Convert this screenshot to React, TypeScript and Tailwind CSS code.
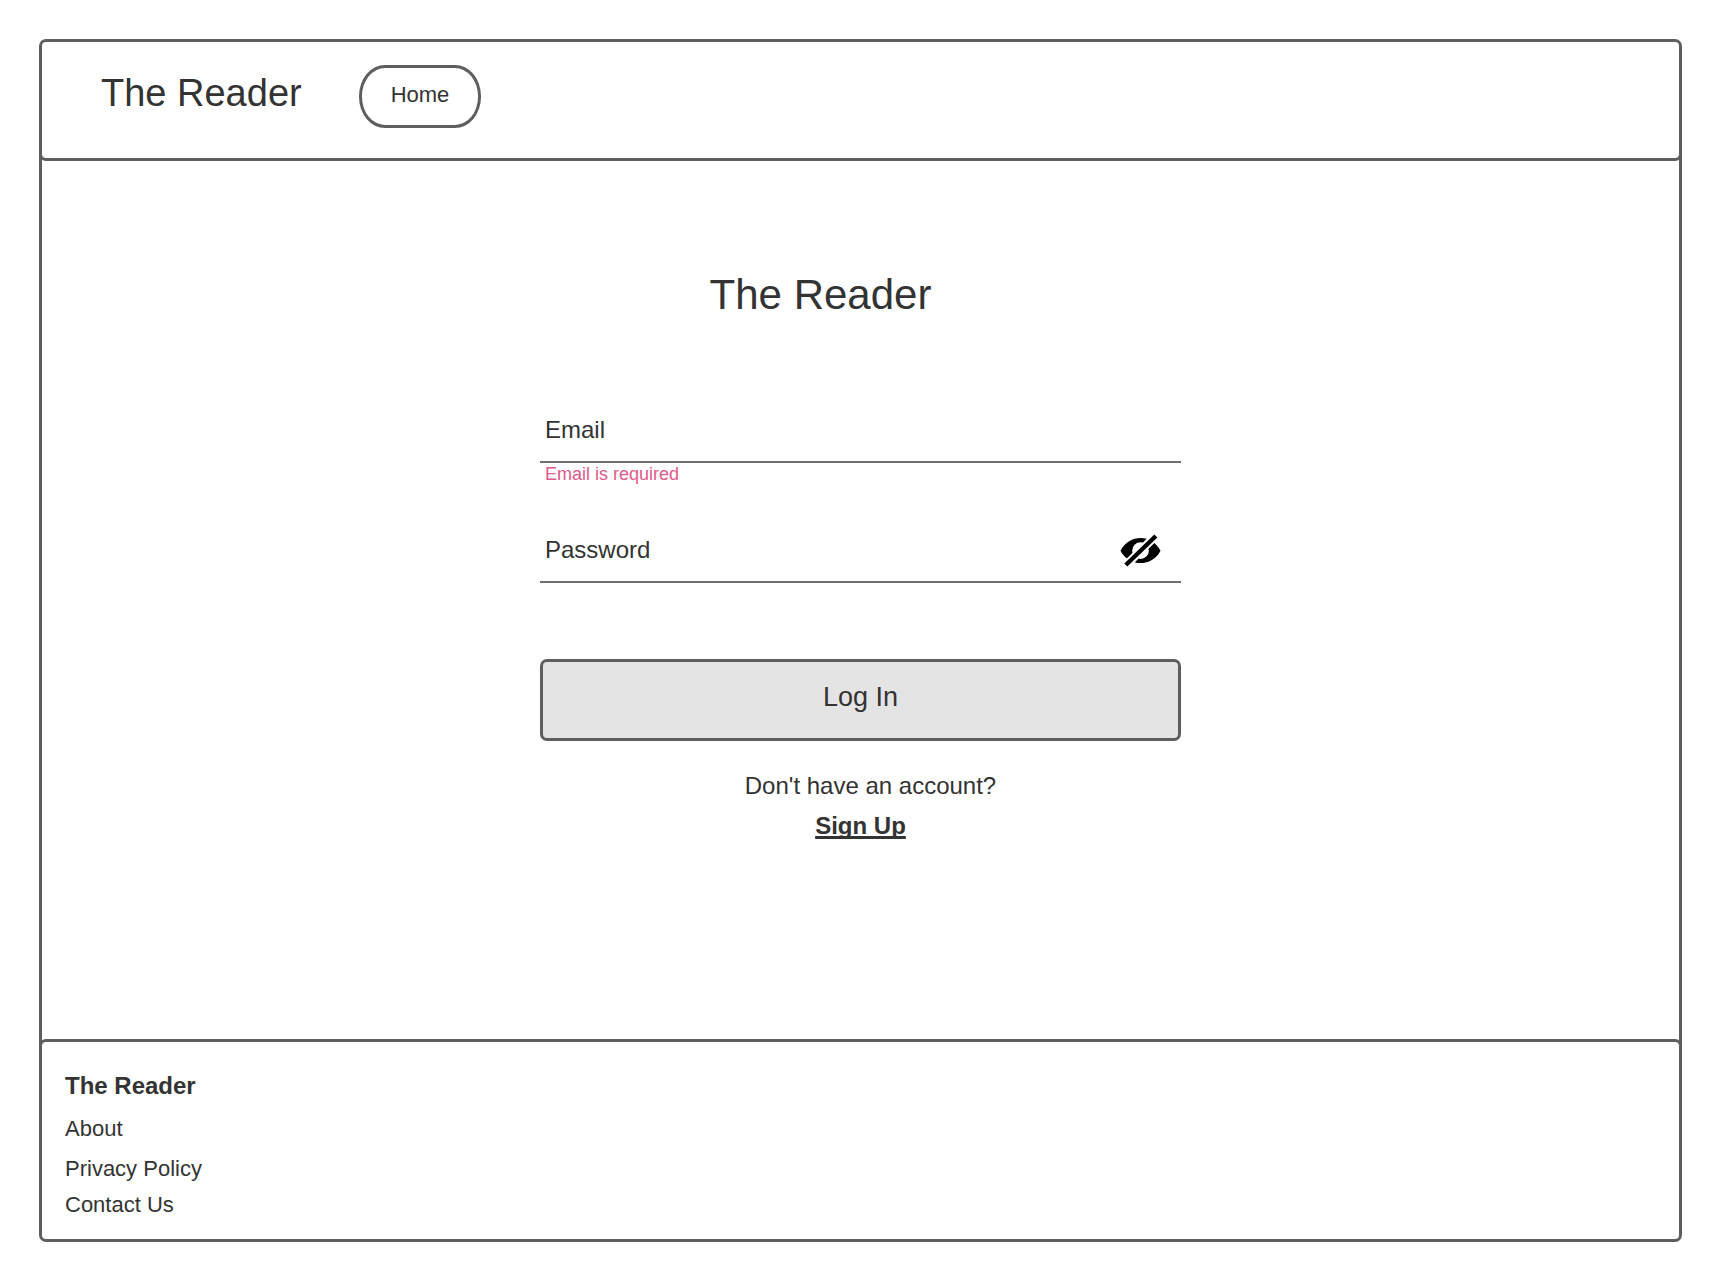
import { useState } from "react";

function EyeOffIcon() {
  return (
    <svg viewBox="90 45 122 99" className="h-[33px] w-[41px]" aria-hidden="true">
      <path
        fill="#000"
        fillRule="evenodd"
        d="M91 95C104 70 128 57 151 57C175 57 198 70 211 95C198 120 175 132 151 132C128 132 104 120 91 95ZM151 70A25 25 0 1 0 151 120A25 25 0 1 0 151 70Z"
      />
      <path fill="none" stroke="#fff" strokeWidth="25" d="M202 45L102 144" />
      <path fill="none" stroke="#000" strokeWidth="13" d="M197 51L107 138" />
    </svg>
  );
}

const footerLink = "text-[22px] leading-[28px] hover:underline";

export default function App() {
  const [showPassword, setShowPassword] = useState(false);

  return (
    <div className="flex min-h-screen flex-col bg-white pt-[39px] pr-[38px] pb-[38px] pl-[39px] font-['Liberation_Sans',Arial,sans-serif] text-[#333333]">
      <header className="flex items-start gap-[57px] rounded-[7px] border-3 border-[#5e5e5e] pt-[23px] pb-[30px] pl-[59px]">
        <h1 className="text-[38px] leading-[56px]">The Reader</h1>
        <nav>
          <a
            href="#home"
            className="block rounded-[26px/31px] border-3 border-[#5e5e5e] px-[29px] pb-1 text-[22px] leading-[53px]"
          >
            Home
          </a>
        </nav>
      </header>

      <main className="-my-2 flex flex-1 flex-col items-center border-x-3 border-[#5e5e5e] px-4 pt-[118px] pb-16">
        <form className="flex w-full max-w-[641px] flex-col" onSubmit={(e) => e.preventDefault()}>
          <h2 className="pr-20 text-center text-[42px] leading-[48px]">The Reader</h2>

          <div className="mt-[95px] flex border-b-2 border-[#6e6e6e] pb-[15px] pl-[5px] text-[24px] leading-[32px]">
            <label htmlFor="email">Email</label>
            <input
              id="email"
              type="email"
              aria-describedby="email-error"
              className="min-w-0 flex-1 px-3 outline-none"
            />
          </div>
          <p id="email-error" className="pl-[5px] text-[18px] leading-[22px] text-[#e0598b]">
            Email is required
          </p>

          <div className="mt-[49px] flex items-center border-b-2 border-[#6e6e6e] pr-5 pb-[15px] pl-[5px] text-[24px] leading-[32px]">
            <label htmlFor="password">Password</label>
            <input
              id="password"
              type={showPassword ? "text" : "password"}
              className="h-8 min-w-0 flex-1 px-3 outline-none"
            />
            <button
              type="button"
              aria-label="Show password"
              aria-pressed={showPassword}
              onClick={() => setShowPassword(!showPassword)}
              className="flex h-8 items-center"
            >
              <EyeOffIcon />
            </button>
          </div>

          <button
            type="submit"
            className="mt-[76px] rounded-[7px] border-3 border-[#5e5e5e] bg-[#e4e4e4] pb-[6px] text-[27px] leading-[70px]"
          >
            Log In
          </button>

          <p className="mt-[29px] pl-5 text-center text-[24px] leading-[32px]">Don't have an account?</p>
          <a
            href="#signup"
            className="mt-2 self-center text-[24px] leading-[32px] font-bold underline decoration-[3px] underline-offset-[2px] [text-decoration-skip-ink:none]"
          >
            Sign Up
          </a>
        </form>
      </main>

      <footer className="rounded-[7px] border-3 border-[#5e5e5e] pt-7 pb-5 pl-[23px]">
        <h3 className="text-[24px] leading-[32px] font-bold">The Reader</h3>
        <nav className="flex flex-col items-start pt-[13px]">
          <a href="#about" className={footerLink}>
            About
          </a>
          <a href="#privacy" className={`${footerLink} mt-3`}>
            Privacy Policy
          </a>
          <a href="#contact" className={`${footerLink} mt-2`}>
            Contact Us
          </a>
        </nav>
      </footer>
    </div>
  );
}
